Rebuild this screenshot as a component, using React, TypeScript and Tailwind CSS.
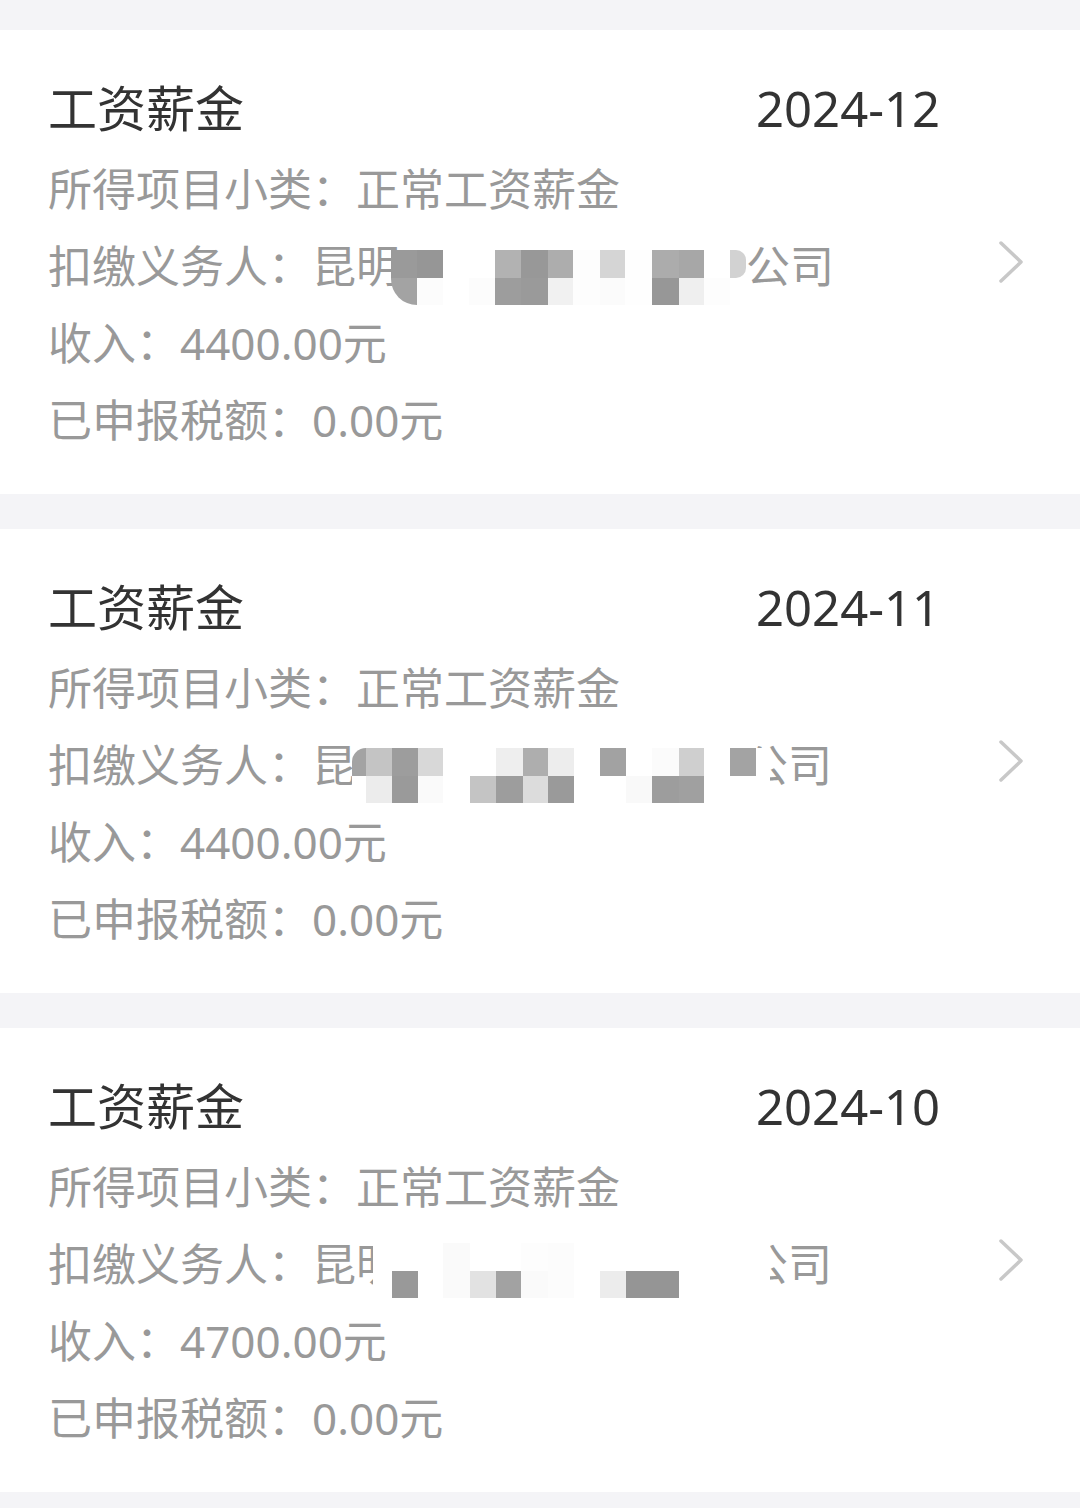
import React from 'react';

type Cell = { w: string; t: string; b: string };

interface Record {
  month: string;
  income: string;
  lead: string;
  leadShift: string;
  mosaicTop: string;
  tailShift: string;
  cells: Cell[];
}

const W = 'bg-white';

const records: Record[] = [
  {
    month: '2024-12',
    income: '4400.00元',
    lead: '昆明',
    leadShift: 'ml-[-9px]',
    mosaicTop: 'mt-[22px]',
    tailShift: 'ml-0',
    cells: [
      { w: 'w-[26px]', t: 'bg-[#9a9a9a]', b: 'bg-[#a3a3a3] rounded-bl-[26px]' },
      { w: 'w-[26px]', t: 'bg-[#969696]', b: 'bg-[#fcfcfc]' },
      { w: 'w-[26px]', t: W, b: W },
      { w: 'w-[26px]', t: W, b: 'bg-[#fcfcfc]' },
      { w: 'w-[26px]', t: 'bg-[#b2b2b2]', b: 'bg-[#9d9d9d]' },
      { w: 'w-[27px]', t: 'bg-[#989898]', b: 'bg-[#9a9a9a]' },
      { w: 'w-[25px]', t: 'bg-[#adadad]', b: 'bg-[#f1f1f1]' },
      { w: 'w-[27px]', t: 'bg-[#fdfdfd]', b: 'bg-[#fdfdfd]' },
      { w: 'w-[25px]', t: 'bg-[#d5d5d5]', b: 'bg-[#fbfbfb]' },
      { w: 'w-[27px]', t: 'bg-[#fefefe]', b: 'bg-[#fefefe]' },
      { w: 'w-[27px]', t: 'bg-[#acacac]', b: 'bg-[#979797]' },
      { w: 'w-[25px]', t: 'bg-[#a7a7a7]', b: 'bg-[#efefef]' },
      { w: 'w-[26px]', t: W, b: 'bg-[#fdfdfd]' },
      { w: 'w-[16px]', t: 'bg-[#d2d2d2] rounded-r-[10px]', b: W },
    ],
  },
  {
    month: '2024-11',
    income: '4400.00元',
    lead: '昆',
    leadShift: 'ml-[-4px]',
    mosaicTop: 'mt-[21px]',
    tailShift: 'ml-[-26px]',
    cells: [
      { w: 'w-[14px]', t: 'bg-[#a3a3a3] rounded-tl-[14px]', b: W },
      { w: 'w-[26px]', t: 'bg-[#c4c4c4]', b: 'bg-[#ececec]' },
      { w: 'w-[26px]', t: 'bg-[#9d9d9d]', b: 'bg-[#9a9a9a]' },
      { w: 'w-[25px]', t: 'bg-[#d8d8d8]', b: 'bg-[#fafafa]' },
      { w: 'w-[27px]', t: W, b: W },
      { w: 'w-[26px]', t: W, b: 'bg-[#c4c4c4]' },
      { w: 'w-[27px]', t: 'bg-[#eeeeee]', b: 'bg-[#9d9d9d]' },
      { w: 'w-[25px]', t: 'bg-[#aeaeae]', b: 'bg-[#dcdcdc]' },
      { w: 'w-[26px]', t: 'bg-[#ededed]', b: 'bg-[#9a9a9a]' },
      { w: 'w-[26px]', t: W, b: W },
      { w: 'w-[26px]', t: 'bg-[#a2a2a2]', b: W },
      { w: 'w-[26px]', t: W, b: 'bg-[#f9f9f9]' },
      { w: 'w-[27px]', t: 'bg-[#fbfbfb]', b: 'bg-[#9d9d9d]' },
      { w: 'w-[25px]', t: 'bg-[#cfcfcf]', b: 'bg-[#a0a0a0]' },
      { w: 'w-[26px]', t: W, b: W },
      { w: 'w-[26px]', t: 'bg-[#a3a3a3]', b: W },
      { w: 'w-[14px]', t: W, b: W },
    ],
  },
  {
    month: '2024-10',
    income: '4700.00元',
    lead: '昆明',
    leadShift: 'ml-[-27px]',
    mosaicTop: 'mt-[17px]',
    tailShift: 'ml-[-26px]',
    cells: [
      { w: 'w-[19px]', t: W, b: W },
      { w: 'w-[26px]', t: W, b: 'bg-[#999999]' },
      { w: 'w-[25px]', t: W, b: W },
      { w: 'w-[27px]', t: 'bg-[#fafafa]', b: 'bg-[#fafafa]' },
      { w: 'w-[26px]', t: W, b: 'bg-[#e2e2e2]' },
      { w: 'w-[25px]', t: W, b: 'bg-[#a2a2a2]' },
      { w: 'w-[27px]', t: 'bg-[#fdfdfd]', b: 'bg-[#fafafa]' },
      { w: 'w-[26px]', t: 'bg-[#fcfcfc]', b: 'bg-[#fcfcfc]' },
      { w: 'w-[26px]', t: W, b: W },
      { w: 'w-[26px]', t: W, b: 'bg-[#ececec]' },
      { w: 'w-[26px]', t: W, b: 'bg-[#959595]' },
      { w: 'w-[27px]', t: W, b: 'bg-[#959595]' },
      { w: 'w-[25px]', t: W, b: W },
      { w: 'w-[26px]', t: W, b: W },
      { w: 'w-[40px]', t: W, b: W },
    ],
  },
];

// pixelated blur over the company name
const Mosaic: React.FC<{ cells: Cell[]; className: string }> = ({ cells, className }) => (
  <div className={`relative z-10 flex self-start ${className}`}>
    {cells.map((c, i) => (
      <div key={i} className={`flex flex-col ${c.w}`}>
        <div className={`h-[28px] ${c.t}`} />
        <div className={`h-[27px] ${c.b}`} />
      </div>
    ))}
  </div>
);

const Chevron = () => (
  <svg width="26" height="44" viewBox="0 0 26 44" fill="none" className="ml-[58px] shrink-0 self-center">
    <polyline
      points="3,3 23,22 3,41"
      stroke="#c8c8c8"
      strokeWidth="3.5"
      strokeLinecap="round"
      strokeLinejoin="round"
    />
  </svg>
);

const RecordCard: React.FC<{ r: Record }> = ({ r }) => (
  <div className="flex h-[464px] bg-white pl-[48px]">
    <div className="flex w-[892px] flex-col pt-[40px]">
      <div className="flex h-[77px] items-center justify-between text-[49px] text-[#333333]">
        <span>工资薪金</span>
        <span>{r.month}</span>
      </div>
      <div className="mt-[4px] flex flex-col text-[44px] leading-[77px] text-[#999999]">
        <div className="h-[77px] whitespace-nowrap">所得项目小类：正常工资薪金</div>
        <div className="flex h-[77px] whitespace-nowrap">
          <span>扣缴义务人：{r.lead}</span>
          <Mosaic cells={r.cells} className={`${r.leadShift} ${r.mosaicTop}`} />
          <span className={`relative ${r.tailShift}`}>公司</span>
        </div>
        <div className="h-[77px] whitespace-nowrap">收入：{r.income}</div>
        <div className="h-[77px] whitespace-nowrap">已申报税额：0.00元</div>
      </div>
    </div>
    <Chevron />
  </div>
);

export default function App() {
  return (
    <div className="flex min-h-[1508px] w-[1080px] flex-col gap-[35px] bg-[#f4f4f7] pt-[30px] font-['Noto_Sans','Noto_Sans_CJK_SC',sans-serif]">
      {records.map((r) => (
        <RecordCard key={r.month} r={r} />
      ))}
    </div>
  );
}
